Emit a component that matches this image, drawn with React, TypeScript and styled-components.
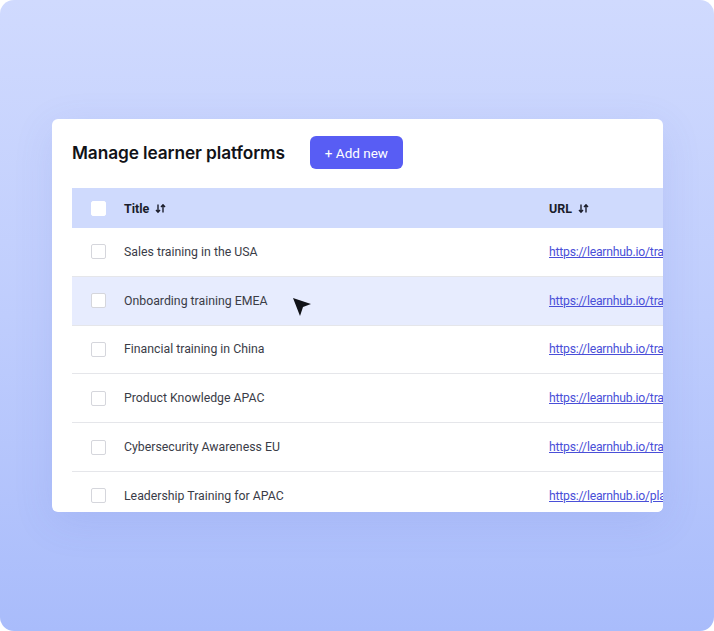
import React from "react";
import styled, { createGlobalStyle } from "styled-components";

const GlobalStyle = createGlobalStyle`
  html, body {
    margin: 0;
    padding: 0;
    background: #ffffff;
  }
  * {
    box-sizing: border-box;
  }
`;

const rows = [
  { title: "Sales training in the USA", url: "https://learnhub.io/training/sales-usa" },
  { title: "Onboarding training EMEA", url: "https://learnhub.io/training/onboarding-emea", active: true },
  { title: "Financial training in China", url: "https://learnhub.io/training/finance-china" },
  { title: "Product Knowledge APAC", url: "https://learnhub.io/training/product-apac" },
  { title: "Cybersecurity Awareness EU", url: "https://learnhub.io/training/cyber-eu" },
  { title: "Leadership Training for APAC", url: "https://learnhub.io/platform/leadership-apac" },
];

const SortIcon = () => (
  <svg width="11" height="11" viewBox="0 0 11 11" fill="none" stroke="#1b1d2b" strokeWidth="1.4">
    <path d="M3 1.5v7.5M1 7l2 2.2L5 7" />
    <path d="M8 9.5V2M6 4l2-2.2L10 4" />
  </svg>
);

const Cursor = () => (
  <CursorMark width="20" height="20" viewBox="0 0 20 20">
    <polygon points="1,1 19,7 11,10 8,19" fill="#111318" />
  </CursorMark>
);

const App = () => {
  return (
    <>
      <GlobalStyle />
      <Frame>
        <Card>
          <CardHeader>
            <Heading>Manage learner platforms</Heading>
            <AddButton>+ Add new</AddButton>
          </CardHeader>
          <Table>
            <HeaderRow>
              <CheckCell>
                <Checkbox $header />
              </CheckCell>
              <HeadCell>
                Title <SortIcon />
              </HeadCell>
              <HeadCell>
                URL <SortIcon />
              </HeadCell>
            </HeaderRow>
            {rows.map((row) => (
              <Row key={row.title} $active={row.active}>
                <CheckCell>
                  <Checkbox />
                </CheckCell>
                <Cell>{row.title}</Cell>
                <UrlCell>
                  <Link href="#">{row.url}</Link>
                </UrlCell>
                {row.active && <Cursor />}
              </Row>
            ))}
          </Table>
        </Card>
      </Frame>
    </>
  );
};

export default App;

const Frame = styled.div`
  width: 714px;
  height: 631px;
  border-radius: 14px;
  background: linear-gradient(180deg, #d0dafe 0%, #bfcdfd 50%, #a9bcfb 100%);
  padding: 119px 51px 0 52px;
  overflow: hidden;
`;

const Card = styled.div`
  width: 611px;
  height: 393px;
  background: #ffffff;
  border-radius: 6px;
  overflow: hidden;
  box-shadow: 0 10px 40px rgba(80, 100, 200, 0.12);
  display: flex;
  flex-direction: column;
`;

const CardHeader = styled.div`
  display: flex;
  align-items: center;
  gap: 25px;
  padding: 17px 20px 19px;
`;

const Heading = styled.h1`
  margin: 0;
  font-family: Inter, "Noto Sans", sans-serif;
  font-size: 17.3px;
  font-weight: 600;
  color: #111217;
  letter-spacing: -0.1px;
`;

const AddButton = styled.button`
  width: 93px;
  height: 33px;
  border: none;
  border-radius: 6px;
  background: #585df4;
  color: #ffffff;
  font-family: Roboto, "Noto Sans", sans-serif;
  font-size: 13.5px;
  font-weight: 400;
`;

const Table = styled.div`
  margin-left: 20px;
  width: 591px;
  font-family: Roboto, "Noto Sans", sans-serif;
`;

const HeaderRow = styled.div`
  display: grid;
  grid-template-columns: 52px 425px 1fr;
  align-items: center;
  height: 40px;
  background: #cfdafd;
`;

const Row = styled.div<{ $active?: boolean }>`
  position: relative;
  display: grid;
  grid-template-columns: 52px 425px 1fr;
  align-items: center;
  height: 48.8px;
  background: ${(p) => (p.$active ? "#e7ecfe" : "#ffffff")};
  border-bottom: 1.5px solid #e5e6ea;
`;

const CheckCell = styled.div`
  display: flex;
  padding-left: 19px;
`;

const Checkbox = styled.span<{ $header?: boolean }>`
  width: 15px;
  height: 15px;
  border-radius: 2px;
  background: #ffffff;
  border: 1px solid ${(p) => (p.$header ? "#ffffff" : "#d5d6dc")};
`;

const HeadCell = styled.div`
  display: flex;
  align-items: center;
  gap: 6px;
  font-size: 12.5px;
  font-weight: 700;
  color: #1b1d2b;
`;

const Cell = styled.div`
  font-size: 12.3px;
  color: #3a3c47;
  white-space: nowrap;
`;

const UrlCell = styled.div`
  display: flex;
  overflow: hidden;
  white-space: nowrap;
`;

const Link = styled.a`
  font-size: 12.2px;
  letter-spacing: -0.2px;
  color: #4a4fd8;
  text-decoration: underline;
  white-space: nowrap;
`;

const CursorMark = styled.svg`
  position: absolute;
  left: 220px;
  top: 20px;
`;
